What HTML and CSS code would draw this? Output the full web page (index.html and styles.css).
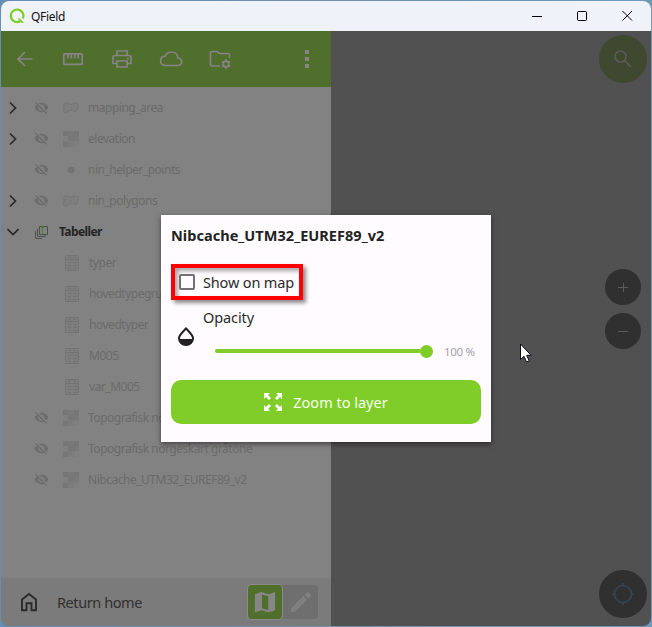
FILE: index.html
```html
<!DOCTYPE html>
<html lang="en">
<head>
<meta charset="utf-8">
<title>QField</title>
<link rel="stylesheet" href="styles.css">
</head>
<body>
<svg class="defs" aria-hidden="true">
  <defs>
    <symbol id="eye" viewBox="0 0 24 24"><path fill="currentColor" d="M12 7c2.76 0 5 2.24 5 5 0 .65-.13 1.26-.36 1.83l2.92 2.92c1.51-1.26 2.7-2.89 3.43-4.75-1.73-4.39-6-7.5-11-7.5-1.4 0-2.74.25-3.98.7l2.16 2.16C10.74 7.13 11.35 7 12 7zM2 4.27l2.28 2.28.46.46C3.08 8.3 1.78 10.02 1 12c1.73 4.39 6 7.5 11 7.5 1.55 0 3.03-.3 4.38-.84l.42.42L19.73 22 21 20.73 3.27 3 2 4.27zM7.53 9.8l1.55 1.55c-.05.21-.08.43-.08.65 0 1.66 1.34 3 3 3 .22 0 .44-.03.65-.08l1.55 1.55c-.67.33-1.41.53-2.2.53-2.76 0-5-2.24-5-5 0-.79.2-1.53.53-2.2zm4.31-.78l3.15 3.15.02-.16c0-1.66-1.34-3-3-3l-.17.01z"/></symbol>
    <symbol id="polygon" viewBox="0 0 16 16"><path fill="#7e7e7e" stroke="#747474" d="M2.500 3C5 2.200 6 5 9 4 12 2.500 15.500 2.500 15.500 5c0 2-1 2.600-1 4 0 2-1.500 3-3.500 2-2-1.500-4-1.200-6 .6C2 14 .5 12.500 .7 10.500 1 9 1.500 8.500 1 6.500 .5 4.500 1 3.500 2.500 3z"/></symbol>
    <symbol id="raster" viewBox="0 0 16 16"><path fill="#7c7c7c" d="M0 0h16v16H0z"/><path fill="#767676" d="M0 0h5v5H0zM5 5h6v5H5zM11 0h5v5h-5zM0 11h5v5H0z"/><path fill="#808080" d="M11 11h5v5h-5zM0 5h5v5H0z"/><path fill="#797979" d="M11 5h5v5h-5zM5 0h6v5H5z"/></symbol>
    <symbol id="table" viewBox="0 0 16 16"><rect x="1.500" y=".5" width="13" height="15" rx="1" fill="#7e7e7e" stroke="#737373"/><path stroke="#737373" fill="none" d="M2 4.500h12M4 2.500h3M9 2.500h3M4 7.500h3M9 7.500h4M4 10.500h3M9 10.500h4M4 13.500h3M9 13.500h4"/></symbol>
    <symbol id="chevron" viewBox="0 0 12 14"><path fill="none" stroke="#292929" stroke-width="1.700" d="M3 1.500L8.500 7 3 12.500"/></symbol>
  </defs>
</svg>
<div class="window">
  <header class="titlebar">
    <svg class="logo" viewBox="0 0 16 16"><path d="M11.200 13.300A6.300 6.300 0 1 1 13.800 10.500" fill="none" stroke="#80cc28" stroke-width="2.200"/><path fill="#80cc28" d="M9.500 9.500L15 14.500l-2 .5-3.500-2.500z"/></svg>
    <span class="app-name">QField</span>
    <div class="controls">
      <svg viewBox="0 0 12 12"><path d="M1 6.500h10" stroke="#000"/></svg>
      <svg viewBox="0 0 12 12"><rect x="1.500" y="1.500" width="9" height="9" rx="1" fill="none" stroke="#000"/></svg>
      <svg viewBox="0 0 12 12"><path d="M1.500 1l9.500 9.500M11 1L1.500 10.500" stroke="#000"/></svg>
    </div>
  </header>
  <div class="body">
    <aside class="panel">
      <nav class="toolbar">
        <svg viewBox="0 0 24 24"><path d="M20.500 12H6M13 5l-7 7 7 7"/></svg>
        <svg viewBox="0 0 24 24"><rect x="2.800" y="6.800" width="18.400" height="10.600" rx="1"/><path d="M7 7v4.500M10.400 7v4.500M13.800 7v4.500M17.200 7v4.500"/></svg>
        <svg viewBox="0 0 24 24"><path d="M6.900 8V4h10.200v4M6.500 16.500H3V10.500q0-2 2-2h14q2 0 2 2v6h-3.500M6.900 14h10.200v6H6.900z"/><path d="M17 11.500h2"/></svg>
        <svg viewBox="0 0 24 24"><path d="M19 11C18.500 7.500 15.800 5 12.500 5 9.700 5 7.300 6.500 6.200 9 3.500 9.300 1.600 11.300 1.600 13.800c0 2.700 2 4.700 4.700 4.700h12.500c2 0 3.800-1.600 3.800-3.700 0-2-1.600-3.600-3.600-3.800z"/></svg>
        <svg viewBox="0 0 24 24"><path d="M12 19H4q-1.500 0-1.500-1.500v-12Q2.500 4.500 4 4.500h5l2.500 2H20q1.500 0 1.500 1.500v3"/><circle cx="18" cy="17" r="2.800"/><path d="M18 12.300v2M18 19.700v2M13.900 14.700l1.800 1M20.300 18.300l1.800 1M13.900 19.300l1.800-1M20.300 15.700l1.800-1"/></svg>
        <svg class="more" viewBox="0 0 24 24"><path d="M10 3h4v4h-4zM10 10h4v4h-4zM10 17h4v4h-4z"/></svg>
      </nav>
      <ul class="layers">
        <li><svg class="arrow"><use href="#chevron"/></svg><svg class="eye"><use href="#eye"/></svg><svg class="kind"><use href="#polygon"/></svg><span>mapping_area</span></li>
        <li><svg class="arrow"><use href="#chevron"/></svg><svg class="eye"><use href="#eye"/></svg><svg class="kind"><use href="#raster"/></svg><span>elevation</span></li>
        <li><i class="arrow"></i><svg class="eye"><use href="#eye"/></svg><svg class="kind" viewBox="0 0 16 16"><circle cx="8" cy="8" r="3" fill="#6c7869" stroke="#707070"/></svg><span>nin_helper_points</span></li>
        <li><svg class="arrow"><use href="#chevron"/></svg><svg class="eye"><use href="#eye"/></svg><svg class="kind"><use href="#polygon"/></svg><span>nin_polygons</span></li>
        <li class="group"><svg class="arrow" viewBox="0 0 12 14"><path d="M.5 4L6 9.500 11.500 4" fill="none" stroke="#292929" stroke-width="1.700"/></svg><svg class="stack" viewBox="0 0 14 16"><path d="M4.500 2.500h8v8h-8zM3 5H2.500v7.500H10V11M1 7.500H.5V14.500H7" fill="none" stroke="#4d504b"/><path d="M7.500 10V2.500M6 4l1.500-2L9 4" fill="none" stroke="#587d32"/></svg><span>Tabeller</span></li>
        <li class="child"><svg class="kind"><use href="#table"/></svg><span>typer</span></li>
        <li class="child"><svg class="kind"><use href="#table"/></svg><span>hovedtypegrupper</span></li>
        <li class="child"><svg class="kind"><use href="#table"/></svg><span>hovedtyper</span></li>
        <li class="child"><svg class="kind"><use href="#table"/></svg><span>M005</span></li>
        <li class="child"><svg class="kind"><use href="#table"/></svg><span>var_M005</span></li>
        <li><i class="arrow"></i><svg class="eye"><use href="#eye"/></svg><svg class="kind"><use href="#raster"/></svg><span>Topografisk norgeskart</span></li>
        <li><i class="arrow"></i><svg class="eye"><use href="#eye"/></svg><svg class="kind"><use href="#raster"/></svg><span>Topografisk norgeskart gråtone</span></li>
        <li><i class="arrow"></i><svg class="eye"><use href="#eye"/></svg><svg class="kind"><use href="#raster"/></svg><span>Nibcache_UTM32_EUREF89_v2</span></li>
      </ul>
      <footer class="bottom">
        <svg class="home" viewBox="0 0 18 20"><path d="M2 7.500L9 2l7 5.500v10.700h-4.500v-7h-5v7H2z" fill="none" stroke="#2b2b2b" stroke-width="1.900"/></svg>
        <span class="return">Return home</span>
        <div class="modes">
          <div class="mode active"><svg viewBox="0 0 24 24"><path fill="#868686" d="M1 3.500L8 1l8 2.500L23 1v20l-7 2.500L8 21l-7 2.500z"/><path fill="#506f2c" d="M8.700 3.800l6.800 2v14.900l-6.800-2z"/></svg></div>
          <div class="mode"><svg viewBox="0 0 24 24"><path fill="#808080" d="M1 19v4h4L18.500 9.500l-4-4zM22.500 5.500q1-1 0-2l-2-2q-1-1-2 0L15.800 4.200l4 4z"/></svg></div>
        </div>
      </footer>
    </aside>
    <main class="map">
      <div class="round search"><svg viewBox="0 0 24 24"><circle cx="9.500" cy="9.500" r="5.500"/><path d="M13.800 13.800l6 6"/></svg></div>
      <div class="zooms">
        <div class="round small"><svg viewBox="0 0 10 10"><path d="M0 5.500h10M5.500 1v9"/></svg></div>
        <div class="round small"><svg viewBox="0 0 10 10"><path d="M0 5.500h10"/></svg></div>
      </div>
      <div class="round locate"><svg viewBox="0 0 24 24"><circle cx="12" cy="12" r="8.500"/><path d="M12 1v3M12 20v3M1 12h3M20 12h3"/></svg></div>
    </main>
  </div>
</div>
<section class="dialog">
  <h1>Nibcache_UTM32_EUREF89_v2</h1>
  <label class="show"><i class="box"></i><span>Show on map</span></label>
  <div class="opacity">
    <svg class="drop" viewBox="0 0 16 19"><path d="M8 1.500C5 4.700 1 7.700 1 11.400a7 6.600 0 0 0 14 0C15 7.700 11 4.700 8 1.500z" fill="none" stroke="#212121" stroke-width="2"/><path d="M1 12h14q-.5 6-7 6T1 12z" fill="#212121"/></svg>
    <div class="control">
      <span class="label">Opacity</span>
      <div class="slider"><i class="track"></i><i class="knob"></i><span class="percent">100 %</span></div>
    </div>
  </div>
  <div class="button">
    <svg viewBox="0 0 18 18"><path fill="#fff" d="M0 0h6L4 2l3 3-2 2-3-3-2 2zM18 0v6l-2-2-3 3-2-2 3-3-2-2zM0 18v-6l2 2 3-3 2 2-3 3 2 2zM18 18h-6l2-2-3-3 2-2 3 3 2-2z"/></svg>
    <span>Zoom to layer</span>
  </div>
</section>
<svg class="cursor" viewBox="0 0 13 20"><path d="M1.500 1v15.500L5 13.300 7.500 19l2.700-1.200-2.500-5.500h4.300z" fill="#fff" stroke="#0a0a14"/></svg>
</body>
</html>
```

FILE: styles.css
```css
* { box-sizing: border-box; }
body { margin: 0; padding: 1px; width: 652px; height: 627px; overflow: hidden; position: relative; background: linear-gradient(90deg, #668fb5, #7190ad 50%, #6c9abb); font-family: "Noto Sans", "Open Sans", sans-serif; }
svg, i { display: block; flex: none; }
span { white-space: nowrap; }
.defs { position: absolute; width: 0; height: 0; }
.window { height: 625px; border-radius: 8px; overflow: hidden; display: flex; flex-direction: column; background: #515151; }
.titlebar { height: 30px; flex: none; background: #eff3f9; display: flex; align-items: center; padding-left: 8px; }
.logo { width: 16px; height: 16px; }
.app-name { font-size: 12px; letter-spacing: -.3px; margin-left: 6px; color: #111; }
.controls { margin-left: auto; display: flex; gap: 33px; padding-right: 18px; }
.controls svg { width: 12px; height: 12px; }
.body { flex: 1; display: flex; min-height: 0; }
.panel { width: 330px; display: flex; flex-direction: column; background: #828282; }
.toolbar { height: 56px; flex: none; background: #506f2c; display: flex; align-items: center; padding-left: 11px; gap: 25px; }
.toolbar svg { width: 24px; height: 24px; fill: none; stroke: #878387; stroke-width: 1.700; }
.toolbar .more { fill: #878387; stroke: none; margin-left: 38px; }
.layers { list-style: none; margin: 0; padding: 5px 0 0; flex: 1; }
.layers li { height: 31px; display: flex; align-items: center; font-size: 12px; letter-spacing: -.48px; color: #6b6b6b; padding-left: 6px; }
.arrow { width: 12px; height: 14px; margin-right: 15px; }
.eye { width: 15px; height: 15px; margin-right: 14px; color: #6c6c6c; }
.kind { width: 16px; height: 16px; margin-right: 9px; }
.layers .child { padding-left: 63px; }
.stack { width: 14px; height: 16px; margin: 0 10px 0 1px; }
.layers .group { color: #242424; font-weight: 700; letter-spacing: -.6px; }
.bottom { height: 48px; background: #7b7b7b; display: flex; align-items: center; padding: 0 13px 0 19px; }
.home { width: 18px; height: 20px; }
.return { margin-left: 19px; font-size: 14.500px; letter-spacing: -.42px; color: #303030; }
.modes { margin-left: auto; display: flex; background: #6f6f6f; border-radius: 4px; gap: 2px; }
.mode { width: 34px; height: 34px; display: flex; align-items: center; justify-content: center; border-radius: 3px; }
.mode svg { width: 22px; height: 22px; }
.active { background: #506f2c; outline: 1px solid #8a8a8a; }
.map { flex: 1; display: flex; flex-direction: column; align-items: flex-end; padding: 4px 4px 8px; }
.round { width: 48px; height: 48px; border-radius: 50%; background: #303030; display: flex; align-items: center; justify-content: center; }
.round svg { width: 24px; height: 24px; fill: none; stroke: #5b5b5b; stroke-width: 1.700; }
.round.search { background: #3e4930; }
.zooms { display: flex; flex-direction: column; gap: 8px; margin: 186px 6px auto 0; }
.round.small { width: 36px; height: 36px; }
.round.small svg { width: 10px; height: 10px; stroke-width: 1; }
.round.locate svg { stroke: #344656; }
.dialog { position: absolute; left: 161px; top: 215px; width: 330px; height: 227px; background: #fffbff; padding: 10px; box-shadow: 0 2px 5px rgba(0,0,0,.5); color: #2b2b2b; font-size: 14.500px; }
.dialog h1 { margin: -1px 0 0; font-size: 14.500px; line-height: 22px; height: 40px; letter-spacing: .04px; color: #222; white-space: nowrap; }
.show { display: flex; align-items: center; width: 132px; height: 36px; border: 4px solid #f00; padding-left: 4px; letter-spacing: -.15px; box-shadow: 3px 3px 4px rgba(0,0,0,.45), inset 3px 3px 4px rgba(0,0,0,.35); }
.box { width: 16px; height: 16px; border: 2px solid #737073; border-radius: 2px; margin-right: 8px; }
.opacity { display: flex; height: 80px; padding-left: 7px; }
.drop { width: 16px; height: 19px; margin: 27px 9px 0 0; }
.control { flex: 1; display: flex; flex-direction: column; }
.label { line-height: 20px; margin-top: 7px; letter-spacing: -.1px; }
.slider { display: flex; align-items: center; height: 16px; margin: 16px 0 0 12px; }
.track { width: 206px; height: 4px; border-radius: 2px; background: #80cc28; }
.knob { width: 13px; height: 13px; border-radius: 50%; background: #80cc28; margin-left: -1px; }
.percent { margin-left: 11px; font-size: 11.500px; letter-spacing: -.3px; color: #a4a1a4; }
.button { height: 44px; background: #80cc28; border-radius: 10px; display: flex; align-items: center; justify-content: center; gap: 11px; color: #f6fff0; }
.button svg { width: 18px; height: 18px; }
.cursor { position: absolute; left: 519px; top: 343px; width: 13px; height: 20px; }
```
